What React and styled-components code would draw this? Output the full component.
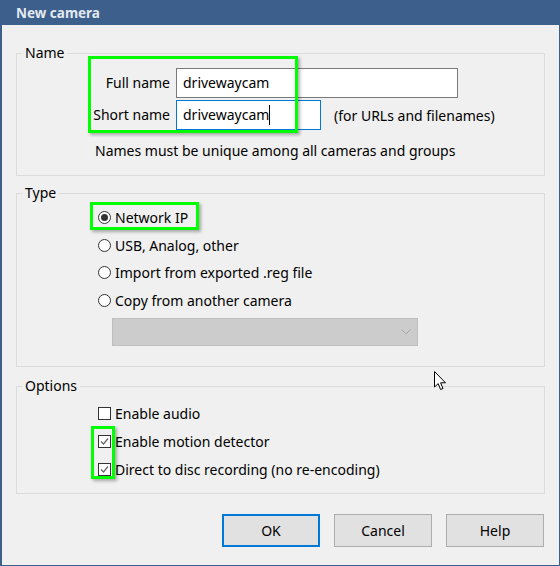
import React from "react";
import styled, { createGlobalStyle } from "styled-components";

const GlobalStyle = createGlobalStyle`
  html, body { margin: 0; padding: 0; }
  body {
    font-family: "Noto Sans", "Open Sans", sans-serif;
    font-size: 14px;
    color: #000;
  }
`;

const Window = styled.div`
  position: relative;
  width: 560px;
  height: 566px;
  background: #3d5f8b;
  display: flex;
  flex-direction: column;
  overflow: hidden;
`;

const TitleBar = styled.div`
  height: 25px;
  padding-left: 16px;
  display: flex;
  align-items: center;
  color: #e3e9f0;
  font-weight: 700;
  font-size: 13.5px;
`;

const Body = styled.div`
  flex: 1;
  margin: 0 1px 1px 2px;
  background: #f0f0f0;
  padding: 19px 14px 0 14px;
`;

const Group = styled.fieldset`
  margin: ${(p) => p.$gap || 0}px 0 0 0;
  padding: 0;
  min-width: 0;
  border: 1px solid #dcdcdc;
`;

const Legend = styled.legend`
  margin-left: 5px;
  padding: 0 3px;
  font-size: 14px;
  line-height: 18px;
`;

const NameGrid = styled.div`
  display: grid;
  grid-template-columns: 82px 1fr;
  column-gap: 6px;
  row-gap: 2px;
  padding: 6px 0 0 71px;
`;

const Label = styled.div`
  height: 30px;
  line-height: 30px;
  text-align: right;
  white-space: nowrap;
`;

const Field = styled.div`
  display: flex;
  align-items: center;
`;

const TextBox = styled.div`
  box-sizing: border-box;
  width: ${(p) => p.$w}px;
  height: 30px;
  background: #fff;
  border: 1px solid ${(p) => (p.$focused ? "#0078d7" : "#7a7a7a")};
  padding: 0 6px;
  line-height: 27px;
  white-space: nowrap;
`;

const Caret = styled.span`
  display: inline-block;
  width: 1px;
  height: 20px;
  background: #000;
  vertical-align: middle;
  margin-top: -3px;
`;

const Hint = styled.span`
  margin-left: 13px;
  white-space: nowrap;
`;

const Note = styled.div`
  margin: 11px 0 0 78px;
  line-height: 20px;
  padding-bottom: 14px;
`;

const OptionList = styled.div`
  padding: ${(p) => p.$top}px 0 ${(p) => p.$bottom}px 81px;
`;

const OptionRow = styled.label`
  display: flex;
  align-items: center;
  gap: 4px;
  height: ${(p) => p.$h}px;
  white-space: nowrap;
`;

const RadioMark = styled.span`
  box-sizing: border-box;
  width: 13px;
  height: 13px;
  border-radius: 50%;
  border: 1px solid #333;
  background: #fff;
  display: flex;
  align-items: center;
  justify-content: center;
  flex: none;

  &::after {
    content: "";
    width: 7px;
    height: 7px;
    border-radius: 50%;
    background: ${(p) => (p.$on ? "#333" : "transparent")};
  }
`;

const CheckMark = styled.span`
  box-sizing: border-box;
  width: 13px;
  height: 13px;
  border: 1px solid #333;
  background: #fff;
  display: flex;
  align-items: center;
  justify-content: center;
  flex: none;
`;

const Select = styled.div`
  box-sizing: border-box;
  width: 306px;
  height: 28px;
  margin: 4px 0 0 14px;
  background: #cccccc;
  border: 1px solid #bfbfbf;
  display: flex;
  align-items: center;
  justify-content: flex-end;
  padding-right: 6px;
`;

const ButtonBar = styled.div`
  display: flex;
  justify-content: flex-end;
  gap: 14px;
  margin: 20px 1px 0 0;
`;

const Button = styled.button`
  box-sizing: border-box;
  width: 98px;
  height: 33px;
  background: #e1e1e1;
  border: ${(p) => (p.$primary ? "2px solid #0078d7" : "1px solid #adadad")};
  font-family: inherit;
  font-size: 14px;
  color: #000;
  padding: 0;
`;

const Highlight = styled.div`
  position: absolute;
  box-sizing: border-box;
  border: 3px solid #00ff00;
  box-shadow: 2px 2px 3px rgba(0, 0, 0, 0.3);
  pointer-events: none;
`;

const Pointer = styled.svg`
  position: absolute;
  left: 434px;
  top: 371px;
`;

function Radio({ on, children }) {
  return (
    <OptionRow $h={27.5}>
      <RadioMark $on={on} />
      {children}
    </OptionRow>
  );
}

function Check({ on, children }) {
  return (
    <OptionRow $h={28}>
      <CheckMark>
        {on && (
          <svg width="11" height="11" viewBox="0 0 11 11">
            <path d="M2 5.5 L4.5 8 L9 2.5" fill="none" stroke="#666" strokeWidth="1.2" />
          </svg>
        )}
      </CheckMark>
      {children}
    </OptionRow>
  );
}

export default function App() {
  return (
    <>
      <GlobalStyle />
      <Window>
        <TitleBar>New camera</TitleBar>
        <Body>
          <Group>
            <Legend>Name</Legend>
            <NameGrid>
              <Label>Full name</Label>
              <Field>
                <TextBox $w={282}>drivewaycam</TextBox>
              </Field>
              <Label>Short name</Label>
              <Field>
                <TextBox $w={145} $focused>
                  drivewaycam<Caret />
                </TextBox>
                <Hint>(for URLs and filenames)</Hint>
              </Field>
            </NameGrid>
            <Note>Names must be unique among all cameras and groups</Note>
          </Group>

          <Group $gap={8}>
            <Legend>Type</Legend>
            <OptionList $top={2} $bottom={20}>
              <Radio on>Network IP</Radio>
              <Radio>USB, Analog, other</Radio>
              <Radio>Import from exported .reg file</Radio>
              <Radio>Copy from another camera</Radio>
              <Select>
                <svg width="10" height="6" viewBox="0 0 10 6">
                  <path d="M0.5 0.5 L5 5 L9.5 0.5" fill="none" stroke="#a8a8a8" strokeWidth="1" />
                </svg>
              </Select>
            </OptionList>
          </Group>

          <Group $gap={10}>
            <Legend>Options</Legend>
            <OptionList $top={4} $bottom={10}>
              <Check>Enable audio</Check>
              <Check on>Enable motion detector</Check>
              <Check on>Direct to disc recording (no re-encoding)</Check>
            </OptionList>
          </Group>

          <ButtonBar>
            <Button $primary>OK</Button>
            <Button>Cancel</Button>
            <Button>Help</Button>
          </ButtonBar>
        </Body>

        <Highlight style={{ left: 88, top: 56, width: 210, height: 77 }} />
        <Highlight style={{ left: 90, top: 202, width: 109, height: 28 }} />
        <Highlight style={{ left: 91, top: 426, width: 24, height: 53 }} />

        <Pointer width="13" height="20" viewBox="0 0 13 20">
          <path
            d="M0.5 0.5 L0.5 16 L4.2 12.6 L6.6 18.5 L9 17.5 L6.6 11.8 L11.5 11.8 Z"
            fill="#fff"
            stroke="#000"
            strokeWidth="1"
            strokeLinejoin="round"
          />
        </Pointer>
      </Window>
    </>
  );
}
